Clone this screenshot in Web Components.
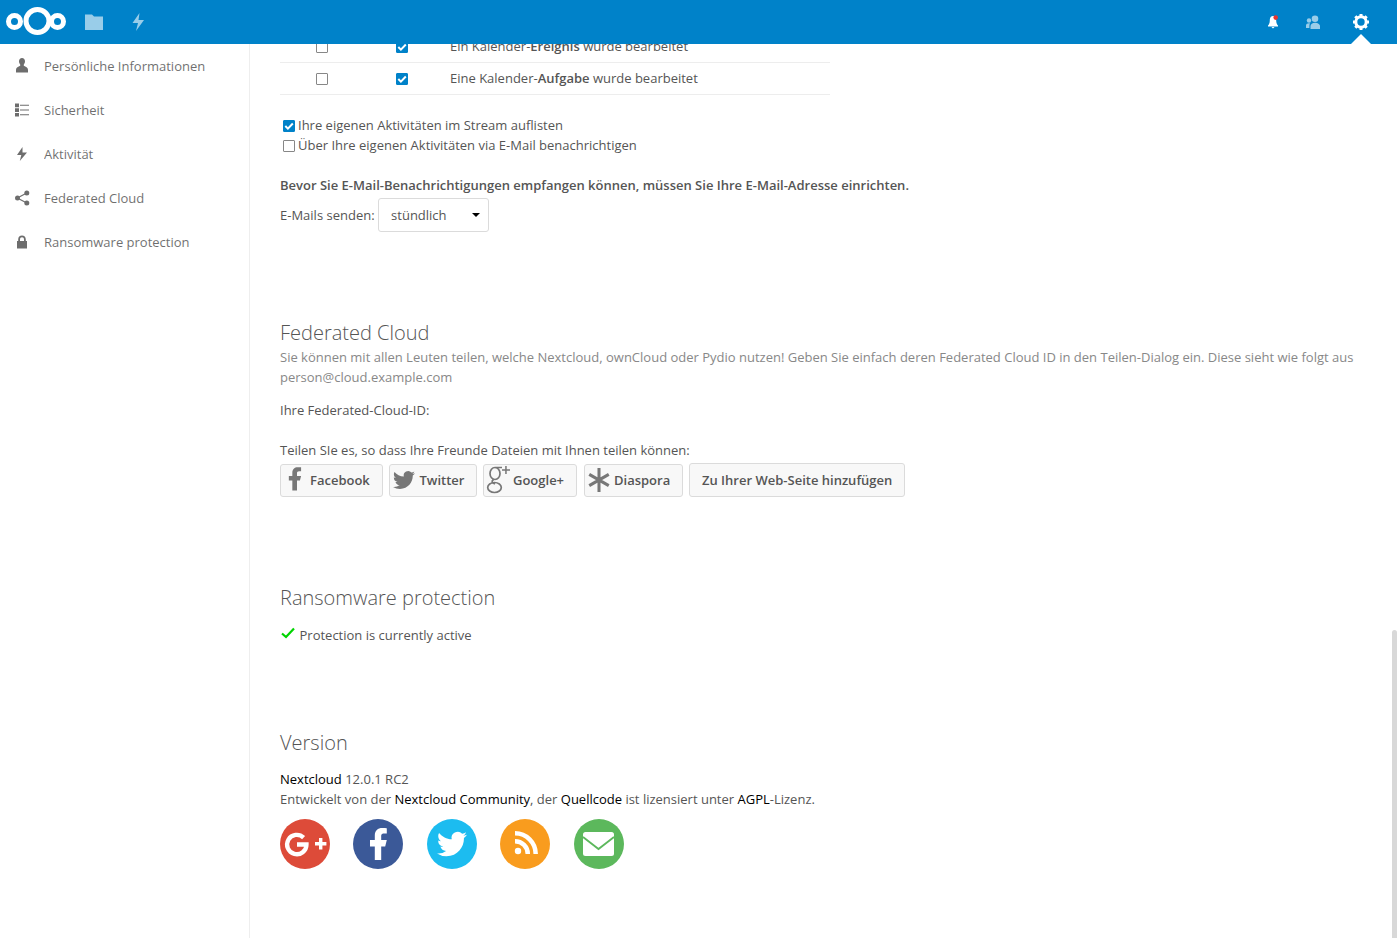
<!DOCTYPE html>
<html lang="de"><head><meta charset="utf-8"><title>Einstellungen</title>
<style>
html,body{margin:0;overflow:hidden;background:#fff}
body{font:13px/20px "Open Sans",sans-serif;color:#555;height:938px;display:flex;flex-direction:column}
</style></head><body>
<nc-header></nc-header>
<nc-shell>
  <nc-nav slot="nav">
    <nc-nav-item icon="user">Persönliche Informationen</nc-nav-item>
    <nc-nav-item icon="list">Sicherheit</nc-nav-item>
    <nc-nav-item icon="bolt">Aktivität</nc-nav-item>
    <nc-nav-item icon="share">Federated Cloud</nc-nav-item>
    <nc-nav-item icon="lock">Ransomware protection</nc-nav-item>
  </nc-nav>
  <nc-activity></nc-activity>
  <nc-federated></nc-federated>
  <nc-ransom></nc-ransom>
  <nc-version></nc-version>
</nc-shell>
<script>
const TW='M23.953 4.57a10 10 0 01-2.825.775 4.958 4.958 0 002.163-2.723c-.951.555-2.005.959-3.127 1.184a4.92 4.92 0 00-8.384 4.482C7.69 8.095 4.067 6.13 1.64 3.162a4.822 4.822 0 00-.666 2.475c0 1.71.87 3.213 2.188 4.096a4.904 4.904 0 01-2.228-.616v.06a4.923 4.923 0 003.946 4.827 4.996 4.996 0 01-2.212.085 4.936 4.936 0 004.604 3.417 9.867 9.867 0 01-6.102 2.105c-.39 0-.779-.023-1.17-.067a13.995 13.995 0 007.557 2.209c9.053 0 13.998-7.496 13.998-13.985 0-.21 0-.42-.015-.63A9.935 9.935 0 0024 4.59z';
const FB='M14 13.5h2.5l1-4H14v-2c0-1.03 0-2 2-2h1.500V2.140c-.326-.043-1.557-.14-2.857-.14C11.928 2 10 3.657 10 6.700v2.800H7v4h3V22h4v-8.500z';
const ICONS={
 user:'<path d="M8 0C6.200 0 5 1.400 5 3.300c0 1.300.5 2.500 1.200 3.200v1.300C4.300 8.800 2 9.500 2 11.800v2.700h12v-2.700c0-2.300-2.300-3-4.200-4V6.500C10.500 5.800 11 4.600 11 3.300 11 1.400 9.800 0 8 0z"/>',
 list:'<path d="M1 1.500h4v3.700H1zM1 6.200h4v3.700H1zM1 10.900h4v3.700H1zM6 2.800h9v1H6zM6 7.500h9v1H6zM6 12.200h9v1H6z"/>',
 bolt:'<path d="M8.500 1 3 9h4.300l-1.500 6L13 6.500H8.500z"/>',
 share:'<circle cx="3.500" cy="8" r="2.500"/><circle cx="12.800" cy="3" r="2.500"/><circle cx="12.800" cy="13" r="2.500"/><path d="M3 7.500 12.500 2.500l.6 1.100L4.500 8l8.600 4.400-.6 1.100L3 8.500z"/>',
 lock:'<path fill-rule="evenodd" d="M8 1.500c-2.300 0-3.800 1.600-3.800 3.900V7H3v7.500h10V7h-1.200V5.400C11.800 3.100 10.300 1.500 8 1.500zM6 7V5.400C6 4 6.800 3.200 8 3.200S10 4 10 5.400V7z"/>'
};
function el(name,css,html){
  customElements.define(name,class extends HTMLElement{
    constructor(){super();
      const r=this.attachShadow({mode:'open'});
      r.innerHTML='<style>'+css+'</style>'+(typeof html==='function'?html(this):html);
    }
  });
}
const P='p{margin:0}a{color:#000;text-decoration:none}h2{margin:0;font-size:20px;font-weight:300;line-height:30px;color:#555}';

el('nc-header',`:host{display:flex;align-items:center;height:44px;flex:none;background:#0082c9;position:relative;z-index:2}
 svg{display:block;flex:none}
 .logo{margin-left:5px}
 .dim{opacity:.6}
 .right{margin-left:auto;display:flex;align-items:center}
 .cell{width:44px;height:44px;display:flex;align-items:center;justify-content:center;position:relative}
 .tri{position:absolute;bottom:0;left:12px;width:0;height:0;border:10px solid transparent;border-top:0;border-bottom-color:#fff}`,
 `<svg class="logo" width="62" height="44" viewBox="0 0 62 44" fill="none" stroke="#fff" stroke-width="5"><circle cx="9.500" cy="21.500" r="6"/><circle cx="32.500" cy="21" r="11.500"/><circle cx="52.500" cy="21.500" r="6"/></svg>
 <svg class="dim" style="margin-left:17px" width="20" height="20" viewBox="0 0 20 20" fill="#fff"><path d="M1 2.500h7l2 2h9V18H1z"/></svg>
 <svg class="dim" style="margin-left:25.500px" width="16" height="18" viewBox="0 0 16 18" fill="#fff"><path d="M9.500 0 2.500 10H8L6 18l8-11H8.500z"/></svg>
 <div class="right">
  <div class="cell" style="margin-right:-4px"><svg width="16" height="16" viewBox="0 0 16 16" fill="#fff"><path d="M8 2C5.500 2 4.800 4 4.800 6.500 4.800 9 4 10.500 3 11.500V12.500h10v-1c-1-1-1.800-2.500-1.800-5C11.200 4 10.500 2 8 2zM6.500 13h3L8 14.500z"/><circle cx="10.700" cy="3.600" r="2.300" fill="#e9322d"/></svg></div>
  <div class="cell" style="margin-right:4px"><svg class="dim" width="16" height="16" viewBox="0 0 16 16" fill="#fff"><circle cx="10" cy="4.700" r="3.300"/><circle cx="4" cy="6.500" r="2.200"/><path d="M5.500 15v-3c0-2 2-3.300 4.500-3.300s5 1.300 5 3.300v3zM1 14v-2.500c0-1.300 1.300-2.200 3-2.200h1c-.4.700-.6 1.500-.6 2.500V14z"/></svg></div>
  <div class="cell" style="margin-right:14px"><svg width="16" height="16" viewBox="0 0 16 16"><circle cx="8" cy="8" r="5.200" fill="none" stroke="#fff" stroke-width="3"/><g stroke="#fff" stroke-width="3"><path d="M8 0v3M8 13v3M0 8h3M13 8h3M2.300 2.300l2.100 2.100M11.600 11.600l2.100 2.100M2.300 13.700l2.100-2.100M11.600 4.400l2.100-2.100"/></g></svg><div class="tri"></div></div>
 </div>`);

el('nc-shell',`:host{display:flex;flex:1;min-height:0;position:relative}
 .main{flex:1;min-width:0;overflow:hidden;padding-left:30px}
 .bar{position:absolute;right:0;top:586px;bottom:0;width:5px;background:#d8d8d8;border-radius:3px 3px 0 0}`,
 `<slot name="nav"></slot><div class="main"><slot></slot></div><div class="bar"></div>`);

el('nc-nav',`:host{display:block;width:249px;flex:none;border-right:1px solid #eee}`,`<slot></slot>`);

el('nc-nav-item',`:host{display:flex;align-items:center;height:44px;color:#000;}
 svg{margin-left:14px;margin-right:14px;flex:none;fill:#000;opacity:.57}
 span{opacity:.57}`,
 t=>`<svg width="16" height="16" viewBox="0 0 16 16">${ICONS[t.getAttribute('icon')]}</svg><span><slot></slot></span>`);

el('nc-check',`:host{display:inline-block;width:10px;height:10px;box-sizing:content-box;border:1px solid #878787;border-radius:1px;background:#fff;flex:none;margin-top:2px}
 :host([on]){background:#0082c9;border-color:#0082c9}
 svg{display:none;width:10px;height:10px}
 :host([on]) svg{display:block}`,
 `<svg viewBox="0 0 10 10"><path d="M1.300 5 3.900 7.600 8.800 2.500" fill="none" stroke="#fff" stroke-width="2"/></svg>`);

el('nc-activity',`:host{display:block}${P}
 .table{width:550px;margin-top:-13px}
 .row{display:flex;align-items:center;height:30px;padding-bottom:1px;border-bottom:1px solid #ededed;padding-left:36px}
 .row nc-check{margin-right:68px}
 .row nc-check+nc-check{margin-right:42px}
 b{font-weight:600}
 .opts{margin-top:20px}
 .opt{display:flex;align-items:center;height:20px;padding-left:3px}
 .opt span{margin-left:3px}
 .warn{font-weight:600;margin-top:20px}
 .send{display:flex;align-items:center;margin-top:3px;height:34px}
 .select{margin-left:3px;height:32px;border:1px solid #dbdbdb;border-radius:3px;display:flex;align-items:center;padding-left:12.500px;box-sizing:content-box;width:96.500px;position:relative}
 .select i{position:absolute;right:8px;top:14px;width:0;height:0;border:4px solid transparent;border-top-color:#000;border-bottom:0}`,
 `<div class="table">
   <div class="row"><nc-check></nc-check><nc-check on></nc-check><span>Ein Kalender-<b>Ereignis</b> wurde bearbeitet</span></div>
   <div class="row"><nc-check></nc-check><nc-check on></nc-check><span>Eine Kalender-<b>Aufgabe</b> wurde bearbeitet</span></div>
  </div>
  <div class="opts">
   <div class="opt"><nc-check on></nc-check><span>Ihre eigenen Aktivitäten im Stream auflisten</span></div>
   <div class="opt"><nc-check></nc-check><span>Über Ihre eigenen Aktivitäten via E-Mail benachrichtigen</span></div>
  </div>
  <p class="warn">Bevor Sie E-Mail-Benachrichtigungen empfangen können, müssen Sie Ihre E-Mail-Adresse einrichten.</p>
  <div class="send"><span>E-Mails senden:</span><div class="select">stündlich<i></i></div></div>`);

el('nc-btn',`:host{display:inline-flex;align-items:center;box-sizing:border-box;height:33px;background:#f8f8f8;border:1px solid #dbdbdb;border-radius:3px;font-weight:600;padding:0 12px 1px 0;white-space:nowrap;color:#555}
 ::slotted(svg){flex:none;overflow:visible}`,`<slot></slot>`);

el('nc-federated',`:host{display:block;margin-top:86px}${P}
 .hint{color:#888;margin-top:-1px;margin-right:30px}
 .id{margin-top:13px}
 .share{margin-top:20px}
 .btns{display:flex;gap:6px;margin-top:4px;align-items:flex-start}
 svg{fill:#777;display:block}`,
 `<h2>Federated Cloud</h2>
  <p class="hint">Sie können mit allen Leuten teilen, welche Nextcloud, ownCloud oder Pydio nutzen! Geben Sie einfach deren Federated Cloud ID in den Teilen-Dialog ein. Diese sieht wie folgt aus person@cloud.example.com</p>
  <p class="id">Ihre Federated-Cloud-ID:</p>
  <p class="share">Teilen SIe es, so dass Ihre Freunde Dateien mit Ihnen teilen können:</p>
  <div class="btns">
   <nc-btn style="width:103px"><svg width="28" height="28" viewBox="2 1 24 24" style="margin:0 -1px 0 2px"><path d="${FB}"/></svg>Facebook</nc-btn>
   <nc-btn style="width:88px"><svg width="22" height="22" viewBox="0 0 24 24" style="margin:0 4.500px 0 3px"><path d="${TW}"/></svg>Twitter</nc-btn>
   <nc-btn style="width:94px"><svg width="26" height="28" viewBox="0 0 26 28" style="margin:0 3px 0 0"><g fill="none" stroke="#777" stroke-width="1.700"><ellipse cx="11" cy="7.500" rx="5" ry="6"/><ellipse cx="10.500" cy="21.500" rx="6.800" ry="5"/><path d="M9.500 13.500c-2.500 2-1.500 3.500 1.500 4.500M11.500 1.500H18"/></g><path d="M21.200 0h1.500v3.300H26v1.500h-3.300V8h-1.500V4.800H18V3.300h3.200z"/></svg>Google+</nc-btn>
   <nc-btn style="width:99px;margin-left:1px"><svg width="26" height="26" viewBox="0 0 24 24" style="margin:0 2px 0 1px"><path stroke="#777" stroke-width="2.800" d="M12 1v22M3 6.800l18 10.400M3 17.200 21 6.800"/></svg>Diaspora</nc-btn>
   <nc-btn style="width:216px;height:34px;margin-top:-1px;padding:0 0 0 12px">Zu Ihrer Web-Seite hinzufügen</nc-btn>
  </div>`);

el('nc-ransom',`:host{display:block;margin-top:86px}${P}
 .st{display:flex;align-items:center;margin-top:12px;height:20px}
 svg{margin:-5px 4.500px 0 1px;flex:none}`,
 `<h2>Ransomware protection</h2>
  <div class="st"><svg width="14" height="12" viewBox="0 0 14 12"><path d="M1 6.500 5 10l8-8.500" fill="none" stroke="#00d400" stroke-width="2.200"/></svg><span>Protection is currently active</span></div>`);

el('nc-version',`:host{display:block;margin-top:83px}${P}
 .v{margin-top:11px}
 .icons{display:flex;margin-top:10px}
 svg{display:block;margin-right:23.400px;flex:none}`,
 `<h2>Version</h2>
  <p class="v"><a>Nextcloud</a> 12.0.1 RC2<br>Entwickelt von der <a>Nextcloud Community</a>, der <a>Quellcode</a> ist lizensiert unter <a>AGPL</a>-Lizenz.</p>
  <div class="icons">
   <svg width="50" height="50" viewBox="0 0 50 50"><circle cx="25" cy="25" r="25" fill="#dd4b39"/><path d="M17 25.500h9.500a9.700 9.700 0 1 1-2.900-6.900" fill="none" stroke="#fff" stroke-width="4.300"/><path d="M39 19h3.400v4h4v3.400h-4v4H39v-4h-4V23h4z" fill="#fff"/></svg>
   <svg width="50" height="50" viewBox="0 0 50 50"><circle cx="25" cy="25" r="25" fill="#3b5998"/><path transform="translate(5.800 5.800) scale(1.600)" d="${FB}" fill="#fff"/></svg>
   <svg width="50" height="50" viewBox="0 0 50 50"><circle cx="25" cy="25" r="25" fill="#1cbcf0"/><path transform="translate(10 10) scale(1.250)" d="${TW}" fill="#fff"/></svg>
   <svg width="50" height="50" viewBox="0 0 50 50"><circle cx="25" cy="25" r="25" fill="#f99c1e"/><circle cx="18" cy="32" r="3.200" fill="#fff"/><path d="M15 22.200a12.800 12.800 0 0 1 12.800 12.800M15 14.300a20.700 20.700 0 0 1 20.700 20.700" fill="none" stroke="#fff" stroke-width="4.500"/></svg>
   <svg width="50" height="50" viewBox="0 0 50 50" style="margin-right:0"><circle cx="25" cy="25" r="25" fill="#5cb85c"/><rect x="9" y="13" width="31" height="24" rx="2.500" fill="#fff"/><path d="M9 18 24.500 30 40 18" fill="none" stroke="#5cb85c" stroke-width="1.800"/></svg>
  </div>`);
</script>
</body></html>
